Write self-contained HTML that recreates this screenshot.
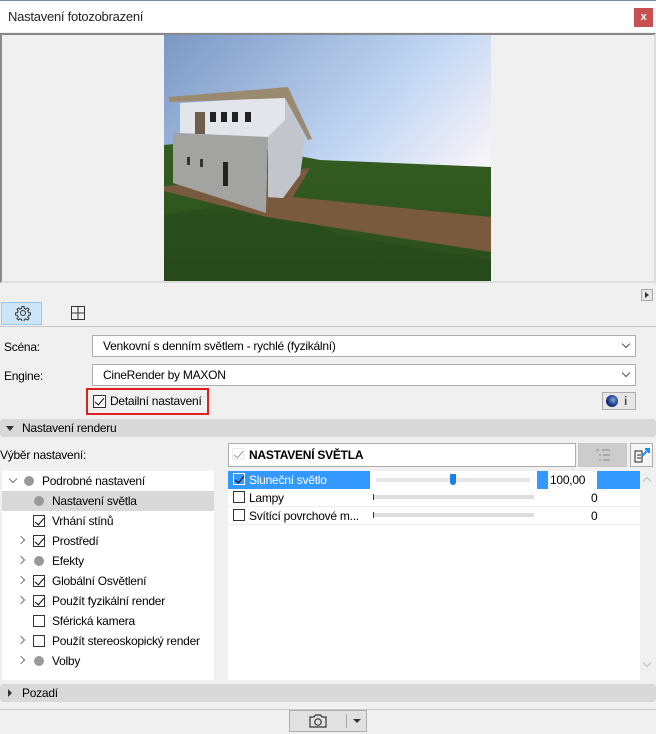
<!DOCTYPE html>
<html><head><meta charset="utf-8"><style>
*{box-sizing:border-box;margin:0;padding:0}
body{width:656px;height:734px;background:#f0f0f0;font-family:"Liberation Sans",sans-serif;font-size:12px;letter-spacing:-0.25px;color:#000;position:relative;overflow:hidden}
.a{position:absolute}
.dd{position:absolute;left:92px;width:544px;height:22px;background:#fff;border:1px solid #adadad;padding:3px 0 0 10px;font-size:12px}
.dd:after{content:"";position:absolute;right:6px;top:5px;width:5px;height:5px;border-right:1px solid #555;border-bottom:1px solid #555;transform:rotate(45deg)}
.cb{position:absolute;width:12px;height:12px;border:1px solid #333;background:#fff}
.cb.c:after{content:"";position:absolute;left:3px;top:0px;width:4px;height:8px;border-right:1.5px solid #000;border-bottom:1.5px solid #000;transform:rotate(40deg)}
.dot{position:absolute;width:10px;height:10px;border-radius:50%;background:#999}
.chev{position:absolute;width:6px;height:6px;border-right:1px solid #777;border-bottom:1px solid #777;transform:rotate(-45deg)}
.hdr{position:absolute;left:0;width:656px;height:18px;background:#d9d9d9;border-radius:3px;padding:2px 0 0 22px}
.tri{position:absolute;width:0;height:0}
.bar{position:absolute;height:4px;background:#ddd}
</style></head><body>
<div class="a" style="left:0;top:0;width:656px;height:32px;background:#fff;border-top:1px solid #6f8fae"></div>
<div class="a" style="left:8px;top:9px;font-size:13px;color:#222">Nastavení fotozobrazení</div>
<div class="a" style="left:634px;top:8px;width:19px;height:19px;background:#c75050;color:#fff;font-weight:bold;font-size:11px;text-align:center;line-height:18px">x</div>
<div class="a" style="left:0;top:33px;width:656px;height:250px;border:2px solid #888;border-right-color:#ddd;border-bottom-color:#ddd;background:#f0f0f0"></div>
<svg class="a" style="left:164px;top:35px" width="327" height="246" viewBox="164 35 327 246">
<defs><linearGradient id="s" x1="0" y1="0" x2="1" y2="0.7"><stop offset="0" stop-color="#7b98c4"/><stop offset="0.6" stop-color="#c4d8f4"/><stop offset="0.85" stop-color="#f0eef6"/><stop offset="1" stop-color="#fff"/></linearGradient>
<linearGradient id="g" x1="0" y1="0" x2="0" y2="1"><stop offset="0" stop-color="#355e22"/><stop offset="1" stop-color="#2a4d1b"/></linearGradient></defs>
<rect x="164" y="35" width="327" height="246" fill="url(#s)"/>
<polygon points="164,145 215,140 320,160 491,167 491,281 164,281" fill="url(#g)"/>
<polygon points="164,215 260,200 340,235 491,260 491,281 164,281" fill="#23451a" opacity=".5"/>
<polygon points="152,188 310,168 293,197 491,217 491,252 267,217" fill="#7a5a3e"/>
<polygon points="180,103 285,97 305,140 300,175 283,198 268,197 268,137 180,133" fill="#e2e5ea"/>
<polygon points="285,97 305,140 300,175 283,198 268,197 268,137 285,120" fill="#c2c6cc"/>
<polygon points="168,97 288,87 312,139 308,140 285,98 170,102" fill="#9a8a70"/>
<polygon points="173,133 268,137 266,213 173,183" fill="#a3a3a1"/>
<rect x="195" y="112" width="10" height="22" fill="#6d5e4e"/>
<rect x="210" y="112" width="6" height="10" fill="#222"/><rect x="221" y="112" width="6" height="10" fill="#222"/><rect x="232" y="112" width="6" height="10" fill="#222"/><rect x="245" y="112" width="6" height="10" fill="#222"/>
<rect x="187" y="157" width="3" height="8" fill="#333"/><rect x="200" y="159" width="3" height="8" fill="#333"/><rect x="223" y="162" width="5" height="24" fill="#222"/>
</svg>
<div class="a" style="left:641px;top:289px;width:12px;height:12px;border:1px solid #aaa;background:#e6e6e6"></div>
<div class="tri" style="left:645px;top:292px;border-left:4px solid #333;border-top:3px solid transparent;border-bottom:3px solid transparent"></div>
<div class="a" style="left:1px;top:302px;width:41px;height:23px;background:#cce4f7;border:1px solid #99c9ef"></div>
<svg class="a" style="left:15px;top:305px" width="16" height="16" viewBox="0 0 16 16"><circle cx="8" cy="8" r="2.5" fill="none" stroke="#333"/><path d="M7 1.5h2l.4 2 1.5.7 1.7-1.2 1.4 1.4-1.2 1.7.7 1.5 2 .4v2l-2 .4-.7 1.5 1.2 1.7-1.4 1.4-1.7-1.2-1.5.7-.4 2h-2l-.4-2-1.5-.7-1.7 1.2-1.4-1.4 1.2-1.700-.7-1.5-2-.4v-2l2-.4.7-1.5-1.2-1.7 1.4-1.4 1.7 1.2 1.5-.7z" fill="none" stroke="#333"/></svg>
<svg class="a" style="left:70px;top:305px" width="16" height="16" viewBox="0 0 16 16"><rect x="1.5" y="1.5" width="13" height="13" fill="none" stroke="#333"/><path d="M8 2v12M2 8h12" stroke="#333"/></svg>
<div class="a" style="left:0;top:326px;width:656px;height:1px;background:#c8c8c8"></div>
<div class="a" style="left:4px;top:340px">Scéna:</div>
<div class="dd" style="top:335px">Venkovní s denním světlem - rychlé (fyzikální)</div>
<div class="a" style="left:4px;top:369px">Engine:</div>
<div class="dd" style="top:364px">CineRender by MAXON</div>
<div class="a" style="left:86px;top:388px;width:123px;height:27px;border:2px solid #e02020"></div>
<div class="cb c" style="left:93px;top:395px;width:13px;height:13px"></div>
<div class="a" style="left:110px;top:394px">Detailní nastavení</div>
<div class="a" style="left:602px;top:392px;width:34px;height:18px;border:1px solid #adadad;background:#e6e6e6"></div>
<div class="a" style="left:606px;top:395px;width:12px;height:12px;border-radius:50%;background:radial-gradient(circle at 60% 40%,#8ab 0,#1a3a9a 50%,#111 100%)"></div>
<div class="a" style="left:624px;top:394px;font-weight:bold;color:#555">i</div>
<div class="hdr" style="top:419px">Nastavení renderu</div>
<div class="tri" style="left:6px;top:426px;border-top:5px solid #333;border-left:4px solid transparent;border-right:4px solid transparent"></div>
<div class="a" style="left:0;top:448px">Výběr nastavení:</div>
<div class="a" style="left:228px;top:443px;width:348px;height:24px;background:#fff;border:1px solid #adadad"></div>
<div class="cb c" style="left:232px;top:448px;border-color:#ccc;opacity:.4"></div>
<div class="a" style="left:249px;top:448px;font-weight:bold">NASTAVENÍ SVĚTLA</div>
<div class="a" style="left:578px;top:443px;width:49px;height:24px;background:#ccc;border:1px solid #c8c8c8"></div>
<svg class="a" style="left:593px;top:447px" width="20" height="16"><path d="M3 3h3M9 3h8M6 8h2M10 8h7M6 13h2M10 13h7" stroke="#aaa" stroke-width="2"/></svg>
<div class="a" style="left:630px;top:443px;width:23px;height:24px;border:1px solid #adadad;background:#f5f5f5"></div>
<svg class="a" style="left:632px;top:446px" width="20" height="19"><path d="M3 5h7v11H3zM5 9h4M5 12h4" fill="none" stroke="#222"/><path d="M10 10l6-6M13 3h4v4" fill="none" stroke="#1a8cff" stroke-width="2"/></svg>
<div class="a" style="left:2px;top:471px;width:212px;height:209px;background:#fff"></div>
<div class="a" style="left:2px;top:491px;width:212px;height:20px;background:#d9d9d9"></div>
<div class="chev" style="left:10px;top:476px;transform:rotate(45deg)"></div>
<div class="dot" style="left:24px;top:476px"></div><div class="a" style="left:42px;top:474px">Podrobné nastavení</div>
<div class="dot" style="left:34px;top:496px"></div><div class="a" style="left:52px;top:494px">Nastavení světla</div>
<div class="cb c" style="left:33px;top:515px"></div><div class="a" style="left:52px;top:514px">Vrhání stínů</div>
<div class="chev" style="left:18px;top:537px"></div><div class="cb c" style="left:33px;top:535px"></div><div class="a" style="left:52px;top:534px">Prostředí</div>
<div class="chev" style="left:18px;top:557px"></div><div class="dot" style="left:34px;top:556px"></div><div class="a" style="left:52px;top:554px">Efekty</div>
<div class="chev" style="left:18px;top:577px"></div><div class="cb c" style="left:33px;top:575px"></div><div class="a" style="left:52px;top:574px">Globální Osvětlení</div>
<div class="chev" style="left:18px;top:597px"></div><div class="cb c" style="left:33px;top:595px"></div><div class="a" style="left:52px;top:594px">Použít fyzikální render</div>
<div class="cb" style="left:33px;top:615px"></div><div class="a" style="left:52px;top:614px">Sférická kamera</div>
<div class="chev" style="left:18px;top:637px"></div><div class="cb" style="left:33px;top:635px"></div><div class="a" style="left:52px;top:634px">Použít stereoskopický render</div>
<div class="chev" style="left:18px;top:657px"></div><div class="dot" style="left:34px;top:656px"></div><div class="a" style="left:52px;top:654px">Volby</div>
<div class="a" style="left:228px;top:471px;width:412px;height:209px;background:#fff"></div>
<div class="a" style="left:228px;top:471px;width:142px;height:18px;background:#3399ff"></div>
<div class="cb c" style="left:233px;top:473px;border-color:#fff;background:#3399ff"></div>
<div class="a" style="left:249px;top:473px;color:#fff">Sluneční světlo</div>
<div class="bar" style="left:376px;top:478px;width:154px;background:#e6e6e6"></div>
<div class="a" style="left:450px;top:474px;width:6px;height:11px;background:#1a7fe0;border-radius:0 0 3px 3px"></div>
<div class="a" style="left:537px;top:471px;width:11px;height:18px;background:#3399ff"></div>
<div class="a" style="left:550px;top:473px">100,00</div>
<div class="a" style="left:597px;top:471px;width:43px;height:18px;background:#3399ff"></div>
<div class="a" style="left:228px;top:506px;width:412px;height:1px;background:#eee"></div>
<div class="cb" style="left:233px;top:491px"></div><div class="a" style="left:249px;top:491px">Lampy</div>
<div class="bar" style="left:373px;top:495px;width:161px"></div><div class="a" style="left:373px;top:494px;width:1px;height:6px;background:#333"></div>
<div class="a" style="left:591px;top:491px">0</div>
<div class="a" style="left:228px;top:524px;width:412px;height:1px;background:#eee"></div>
<div class="cb" style="left:233px;top:509px"></div><div class="a" style="left:249px;top:509px">Svítící povrchové m...</div>
<div class="bar" style="left:373px;top:513px;width:161px"></div><div class="a" style="left:373px;top:512px;width:1px;height:6px;background:#333"></div>
<div class="a" style="left:591px;top:509px">0</div>
<div class="chev" style="left:644px;top:478px;transform:rotate(-135deg);border-color:#bbb"></div>
<div class="chev" style="left:644px;top:660px;transform:rotate(45deg);border-color:#bbb"></div>
<div class="hdr" style="top:684px">Pozadí</div>
<div class="tri" style="left:8px;top:689px;border-left:4px solid #333;border-top:4px solid transparent;border-bottom:4px solid transparent"></div>
<div class="a" style="left:0;top:709px;width:656px;height:1px;background:#c8c8c8"></div>
<div class="a" style="left:289px;top:710px;width:78px;height:22px;background:#e1e1e1;border:1px solid #adadad"></div>
<div class="a" style="left:346px;top:714px;width:1px;height:14px;background:#aaa"></div>
<svg class="a" style="left:308px;top:713px" width="20" height="16"><path d="M2 4h4l1.5-2h5L14 4h4v10H2z" fill="none" stroke="#333" stroke-width="1.2"/><circle cx="10" cy="9" r="3.2" fill="none" stroke="#333" stroke-width="1.2"/></svg>
<div class="tri" style="left:353px;top:719px;border-top:4px solid #333;border-left:4px solid transparent;border-right:4px solid transparent"></div>
</body></html>
